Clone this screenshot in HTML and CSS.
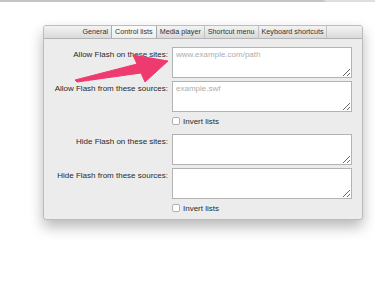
FILE: index.html
```html
<!DOCTYPE html>
<html lang="en">
  <head>
    <meta charset="utf-8" />
    <title>Flash control lists</title>
    <link rel="stylesheet" href="styles.css">
  </head>
  <body>
    <div class="topline"></div>

    <!-- Preferences window -->
    <div class="window">
      <div class="tabs">
        <div class="tab">General</div>
        <div class="tab active">Control lists</div>
        <div class="tab">Media player</div>
        <div class="tab">Shortcut menu</div>
        <div class="tab">Keyboard shortcuts</div>
      </div>

      <div class="content">
        <div class="group">
          <label class="field-label">Allow Flash on these sites:</label>
          <textarea class="field" placeholder="www.example.com/path"></textarea>
          <label class="field-label">Allow Flash from these sources:</label>
          <textarea class="field" placeholder="example.swf"></textarea>
          <div class="check">
            <span class="box"></span>
            <span>Invert lists</span>
          </div>
        </div>

        <div class="group">
          <label class="field-label">Hide Flash on these sites:</label>
          <textarea class="field"></textarea>
          <label class="field-label">Hide Flash from these sources:</label>
          <textarea class="field"></textarea>
          <div class="check">
            <span class="box"></span>
            <span>Invert lists</span>
          </div>
        </div>
      </div>
    </div>

    <!-- Annotation arrow -->
    <svg class="arrow" width="375" height="281" viewBox="0 0 375 281">
      <path d="M75 80 L137 64 L133 55 L168 61 L145 82 L141 73 L77 82 Z" fill="#ef3a6f" stroke="#ef3a6f" stroke-width="1" stroke-linejoin="round" />
    </svg>
  </body>
</html>
```

FILE: styles.css
```css
body {
  margin: 0;
  background: #fff;
  font-family: 'Liberation Sans', Arial, sans-serif;
  color: #2a2a2a;
  width: 375px;
  height: 281px;
  overflow: hidden;
  position: relative;
}

.topline {
  height: 2px;
  background: linear-gradient(to right, #c4c4c4 0%, #c4c4c4 86%, #dedede 87%, #dedede 100%);
}

/* Window */
.window {
  margin: 23px 0 0 43px;
  width: 318px;
  border: 1px solid #bcbcbc;
  border-radius: 3px;
  background: #ececec;
  box-shadow: 0 7px 14px rgba(0, 0, 0, 0.28);
  overflow: hidden;
}

.tabs {
  display: flex;
  justify-content: center;
  height: 12px;
  background: linear-gradient(#f3f3f3, #dadada);
  border-bottom: 1px solid #b4b4b4;
}

.tab {
  font-size: 7.2px;
  line-height: 12px;
  padding: 0 3px;
  color: #333;
  border-left: 1px solid #c2c2c2;
}

.tab:first-child {
  border-left: none;
  padding-left: 4px;
}

.tab:last-child {
  border-right: 1px solid #c2c2c2;
}

.tab.active {
  background: linear-gradient(#fbfbfb, #ededed);
  border-left-color: #aaa;
  border-right: 1px solid #aaa;
}

.tab.active + .tab {
  border-left: none;
}

/* Form */
.content {
  padding: 8px 10px 6px 0;
  display: flex;
  flex-direction: column;
  gap: 8px;
}

.group {
  display: grid;
  grid-template-columns: 124px 180px;
  column-gap: 4px;
  row-gap: 3px;
}

.field-label {
  font-size: 8px;
  text-align: right;
  padding-top: 3px;
  color: #2a2a2a;
}

.field {
  box-sizing: border-box;
  height: 31px;
  width: 180px;
  margin: 0;
  padding: 2px 3px;
  border: 1px solid #b3b3b3;
  border-radius: 0;
  background: #fff;
  font-family: 'Liberation Sans', Arial, sans-serif;
  font-size: 8px;
  color: #333;
  resize: both;
  outline: none;
}

.field::placeholder {
  color: #adadad;
}

.check {
  grid-column: 2;
  display: flex;
  align-items: center;
  gap: 3px;
  font-size: 8px;
  height: 10px;
  margin-top: 1px;
}

.box {
  box-sizing: border-box;
  width: 8px;
  height: 8px;
  border: 1px solid #b0b0b0;
  border-radius: 2px;
  background: #fff;
}

.arrow {
  position: absolute;
  left: 0;
  top: 0;
  pointer-events: none;
}
```
